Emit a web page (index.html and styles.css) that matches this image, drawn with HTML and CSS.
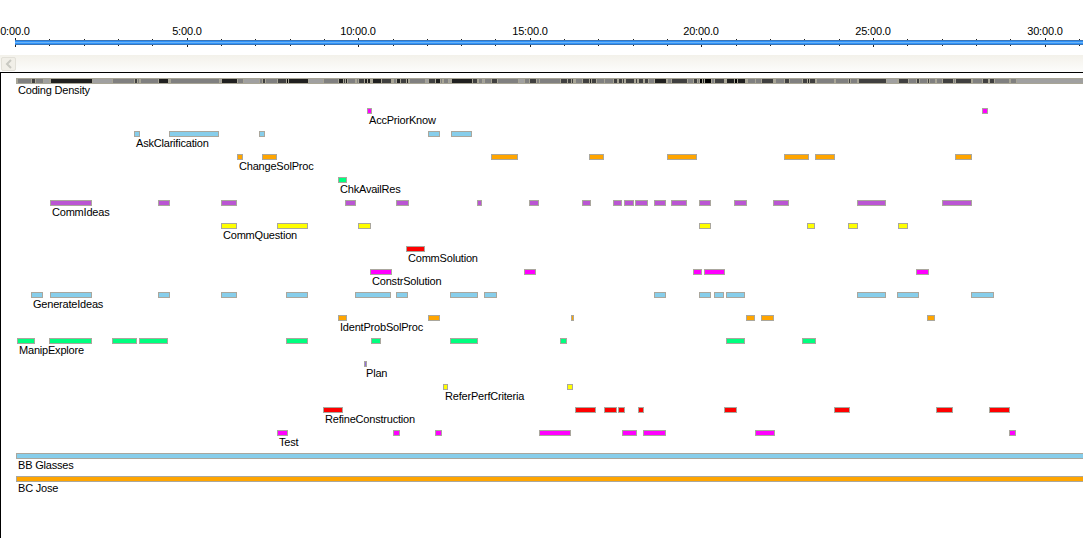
FILE: index.html
```html
<!DOCTYPE html>
<html lang="en">
<head>
    <meta charset="UTF-8">
    <meta name="viewport" content="width=device-width, initial-scale=1.0">
    <title>Coding Timeline</title>
    <link rel="stylesheet" href="styles.css">
</head>
<body>
    <header class="ruler" id="ruler">
        <div class="ruler-band"></div>
    </header>
    <div class="toolbar">
        <button class="scroll-btn" disabled>
            <svg width="8" height="10" viewBox="0 0 8 10"><polyline points="6,1 2,5 6,9" fill="none" stroke="#c9c9c2" stroke-width="2"/></svg>
        </button>
    </div>
    <main class="canvas" id="canvas"></main>
    <script src="timeline.js"></script>
</body>
</html>
```

FILE: styles.css
```css
body {
    font-family: "Liberation Sans", Arial, sans-serif;
    font-size: 11px;
    margin: 0;
    height: 538px;
    overflow: hidden;
    display: flex;
    flex-direction: column;
    background: #fff;
    color: #000;
}
.ruler {
    position: relative;
    height: 55px;
    flex: none;
}
.ruler-band {
    position: absolute;
    left: 15px;
    right: 0;
    top: 40px;
    height: 5px;
    background: linear-gradient(to bottom,
        #3b76b6 0, #3b76b6 1px,
        #2f92fa 1px, #2f92fa 2px,
        #6cb4f4 2px, #6cb4f4 3px,
        #2f92fa 3px, #2f92fa 4px,
        #3b76b6 4px, #3b76b6 5px);
}
.tick {
    position: absolute;
    top: 39px;
    width: 1px;
    height: 7px;
    background: #222;
}
.tick.major {
    top: 38px;
    height: 9px;
}
.tick-label {
    position: absolute;
    top: 25px;
    line-height: 13px;
    letter-spacing: -0.15px;
    transform: translateX(-50%);
    white-space: nowrap;
}
.toolbar {
    flex: none;
    height: 17px;
    display: flex;
    align-items: flex-end;
    padding-left: 1px;
    background: linear-gradient(to bottom, #f3f1ea, #fdfdfc);
}
.scroll-btn {
    width: 15px;
    height: 14px;
    margin-bottom: 1px;
    padding: 0;
    display: flex;
    align-items: center;
    justify-content: center;
    background: #f1efe8;
    border: 1px solid #e2e0d8;
    border-radius: 2px;
}
.canvas {
    flex: 1;
    padding-top: 6px;
    overflow: hidden;
    box-shadow: inset 1px 1px #000;
}
.track {
    height: 23px;
}
.track.density {
    height: 30px;
}
.bars {
    position: relative;
    height: 6px;
}
.bar {
    position: absolute;
    top: 0;
    height: 6px;
    box-sizing: border-box;
    border: 1px solid #aaa79d;
}
.density-base {
    background: #a0a0a0;
    border-color: #a8a596;
}
.density-seg {
    border-color: #a8a596;
}
.track-label {
    line-height: 13px;
    letter-spacing: -0.2px;
    white-space: nowrap;
}
```

FILE: timeline.js
```js
const codes = [
    { name: "AccPriorKnow", color: "#ff00ff", spans: [[367, 372], [982, 988]] },
    { name: "AskClarification", color: "#87ceeb", spans: [[134, 140], [169, 219], [259, 265], [428, 440], [451, 472]] },
    { name: "ChangeSolProc", color: "#ffa500", spans: [[237, 243], [262, 277], [491, 518], [589, 604], [667, 697], [784, 809], [815, 835], [955, 972]] },
    { name: "ChkAvailRes", color: "#00ff7f", spans: [[338, 347]] },
    { name: "CommIdeas", color: "#ba55d3", spans: [[50, 92], [158, 170], [221, 237], [345, 356], [396, 409], [477, 482], [529, 539], [582, 591], [613, 622], [624, 634], [635, 648], [654, 666], [671, 687], [699, 711], [734, 747], [773, 789], [857, 886], [942, 972]] },
    { name: "CommQuestion", color: "#ffff00", spans: [[221, 237], [277, 308], [358, 371], [699, 711], [807, 815], [848, 858], [898, 908]] },
    { name: "CommSolution", color: "#ff0000", spans: [[406, 425]] },
    { name: "ConstrSolution", color: "#ff00ff", spans: [[370, 392], [524, 536], [693, 702], [704, 725], [916, 929]] },
    { name: "GenerateIdeas", color: "#87ceeb", spans: [[31, 43], [50, 92], [158, 170], [221, 237], [286, 308], [355, 391], [396, 408], [450, 478], [484, 497], [654, 666], [699, 711], [714, 724], [726, 745], [857, 886], [897, 919], [971, 994]] },
    { name: "IdentProbSolProc", color: "#ffa500", spans: [[338, 347], [428, 440], [571, 574], [746, 755], [761, 774], [927, 935]] },
    { name: "ManipExplore", color: "#00ff7f", spans: [[17, 35], [49, 92], [112, 137], [139, 168], [286, 308], [371, 381], [450, 478], [560, 567], [726, 745], [802, 816]] },
    { name: "Plan", color: "#9370db", spans: [[364, 367]] },
    { name: "ReferPerfCriteria", color: "#ffff00", spans: [[443, 448], [567, 573]] },
    { name: "RefineConstruction", color: "#ff0000", spans: [[323, 343], [575, 596], [604, 617], [618, 625], [638, 644], [724, 737], [834, 850], [936, 953], [989, 1010]] },
    { name: "Test", color: "#ff00ff", spans: [[277, 288], [393, 400], [435, 442], [539, 571], [622, 637], [643, 666], [755, 775], [1009, 1016]] }
];
const speakers = [
    { name: "BB Glasses", color: "#87ceeb", spans: [[16, 1100]] },
    { name: "BC Jose", color: "#ffa500", spans: [[16, 1100]] }
];
const densityGrays = ["#a0a0a0", "#808080", "#404040", "#202020", "#000000"];

function addBar(parent, start, end, className, color) {
    const bar = document.createElement("div");
    bar.className = className;
    bar.style.left = start + "px";
    bar.style.width = (end - start) + "px";
    bar.style.backgroundColor = color;
    parent.appendChild(bar);
}

function addTrack(name, labelX, extraClass) {
    const track = document.createElement("div");
    track.className = "track " + extraClass;
    const bars = document.createElement("div");
    bars.className = "bars";
    const label = document.createElement("div");
    label.className = "track-label";
    label.style.marginLeft = labelX + "px";
    label.textContent = name;
    track.append(bars, label);
    document.getElementById("canvas").appendChild(track);
    return bars;
}

// ruler: one tick per minute, a label every five
const ruler = document.getElementById("ruler");
const band = ruler.querySelector(".ruler-band");
for (let min = 0; min <= 31; min++) {
    const x = Math.floor(15.5 + min * 34.32);
    const tick = document.createElement("div");
    tick.className = min % 5 === 0 ? "tick major" : "tick";
    tick.style.left = x + "px";
    ruler.insertBefore(tick, band);
    if (min % 5 === 0) {
        const label = document.createElement("div");
        label.className = "tick-label";
        label.style.left = x + "px";
        label.textContent = min + ":00.0";
        ruler.appendChild(label);
    }
}

// density row: shade is how many codes overlap at that point
const densityBars = addTrack("Coding Density", 18, "density");
addBar(densityBars, 16, 1100, "bar density-base", "#a0a0a0");
const allSpans = codes.flatMap(c => c.spans);
const edges = [...new Set(allSpans.flat())].sort((a, b) => a - b);
for (let i = 0; i < edges.length - 1; i++) {
    const from = edges[i];
    const to = edges[i + 1];
    const count = allSpans.filter(s => s[0] <= from && s[1] >= to).length;
    if (count > 0) {
        addBar(densityBars, from, to + 1, "bar density-seg", densityGrays[Math.min(count, 4)]);
    }
}

for (const code of codes.concat(speakers)) {
    const bars = addTrack(code.name, code.spans[0][0] + 2, "");
    for (const span of code.spans) {
        addBar(bars, span[0], span[1], "bar", code.color);
    }
}
```
